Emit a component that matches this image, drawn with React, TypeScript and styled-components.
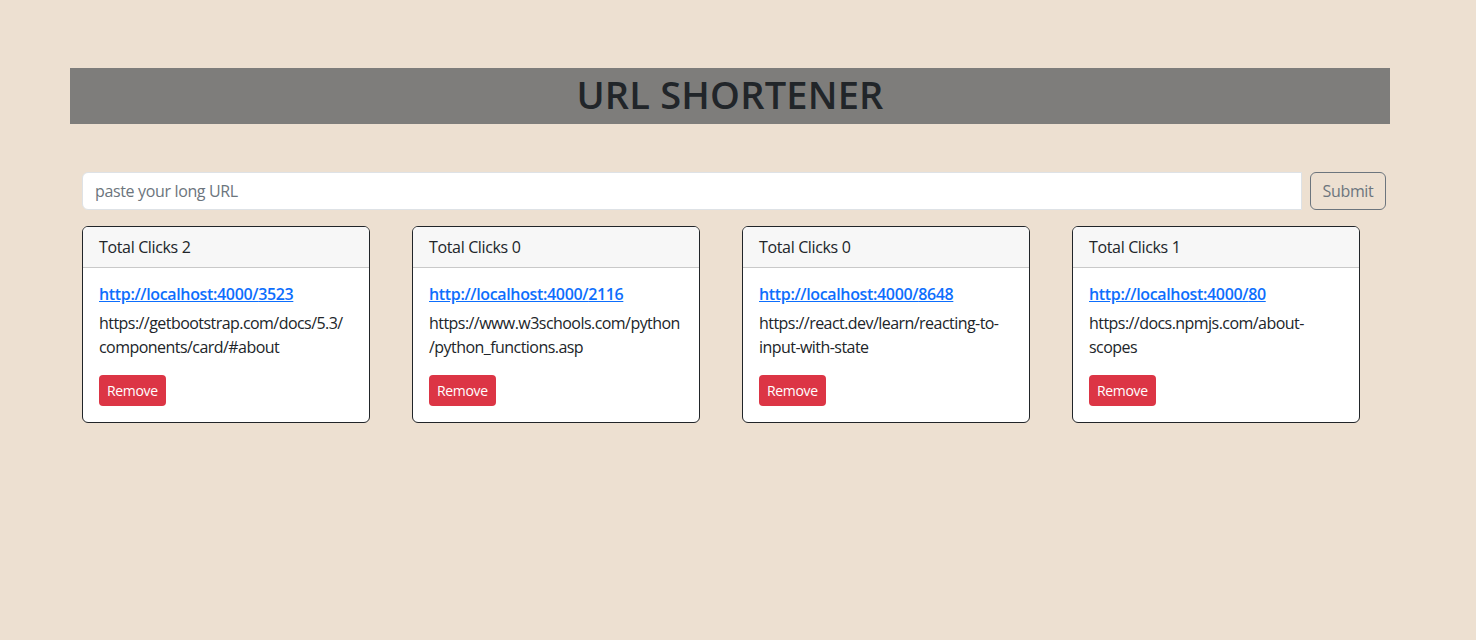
import { Fragment } from "react";
import styled, { createGlobalStyle } from "styled-components";

type Link = {
  id: string;
  clicks: number;
  // parts of the long url, a line may break between them
  longUrl: string[];
};

const links: Link[] = [
  { id: "3523", clicks: 2, longUrl: ["https://getbootstrap.com/docs/5.3/", "components/card/#about"] },
  { id: "2116", clicks: 0, longUrl: ["https://www.w3schools.com/python", "/python_functions.asp"] },
  { id: "8648", clicks: 0, longUrl: ["https://react.dev/learn/reacting-to-input-with-state"] },
  { id: "80", clicks: 1, longUrl: ["https://docs.npmjs.com/about-scopes"] },
];

const App: React.FC = () => {
  return (
    <>
      <GlobalStyle />
      <Page>
        <Header>
          <h1>URL SHORTENER</h1>
        </Header>
        <Form onSubmit={(e) => e.preventDefault()}>
          <UrlInput type="text" placeholder="paste your long URL" />
          <SubmitButton type="submit">Submit</SubmitButton>
        </Form>
        <CardList>
          {links.map((link) => (
            <Card key={link.id}>
              <CardHeader>Total Clicks {link.clicks}</CardHeader>
              <CardBody>
                <ShortLink href="#">http://localhost:4000/{link.id}</ShortLink>
                <LongUrl>
                  {link.longUrl.map((part, i) => (
                    <Fragment key={i}>
                      {i > 0 && <wbr />}
                      {part}
                    </Fragment>
                  ))}
                </LongUrl>
                <RemoveButton>Remove</RemoveButton>
              </CardBody>
            </Card>
          ))}
        </CardList>
      </Page>
    </>
  );
};

export default App;

const GlobalStyle = createGlobalStyle`
  * {
    box-sizing: border-box;
  }
  body {
    margin: 0;
    background-color: #ede0d1;
    color: #212529;
    font-family: "Open Sans", "Noto Sans", sans-serif;
    font-size: 16px;
    line-height: 1.5;
    letter-spacing: -0.35px;
  }
`;

const Page = styled.main`
  width: 1320px;
  margin-left: 70px;
  padding-top: 68px;
  min-height: 640px;
`;

const Header = styled.header`
  background-color: #7e7d7b;
  height: 56px;

  h1 {
    margin: 0;
    text-align: center;
    font-size: 38px;
    font-weight: 600;
    line-height: 48px;
    padding-top: 2px;
    letter-spacing: 0.2px;
  }
`;

const Form = styled.form`
  display: flex;
  gap: 8px;
  margin: 48px 4px 0 12px;
`;

const UrlInput = styled.input`
  flex: 1;
  height: 38px;
  padding: 6px 12px;
  font-family: inherit;
  font-size: 16px;
  letter-spacing: inherit;
  color: #212529;
  background: #fff;
  border: 1px solid #dee2e6;
  border-radius: 6px 0 0 6px;
  outline: none;

  &::placeholder {
    color: #6c757d;
  }
`;

const SubmitButton = styled.button`
  width: 76px;
  height: 38px;
  font-family: inherit;
  font-size: 16px;
  letter-spacing: inherit;
  color: #6c757d;
  background: transparent;
  border: 1px solid #6c757d;
  border-radius: 6px;
  cursor: pointer;
`;

const CardList = styled.section`
  display: flex;
  flex-wrap: wrap;
  gap: 42px;
  margin: 16px 0 0 12px;
`;

const Card = styled.article`
  width: 288px;
  background: #fff;
  border: 1px solid #212529;
  border-radius: 6px;
  overflow: hidden;
  overflow-wrap: break-word;
`;

const CardHeader = styled.div`
  padding: 8px 16px;
  background: #f7f7f7;
  border-bottom: 1px solid #c9c9c9;
`;

const CardBody = styled.div`
  padding: 14px 16px 16px;
`;

const ShortLink = styled.a`
  display: block;
  margin-bottom: 5px;
  color: #0d6efd;
  font-weight: 600;
  text-decoration: underline;
`;

const LongUrl = styled.p`
  margin: 0 0 16px;
  letter-spacing: -0.55px;
`;

const RemoveButton = styled.button`
  height: 31px;
  padding: 4px 8px;
  font-family: inherit;
  font-size: 14px;
  letter-spacing: inherit;
  color: #fff;
  background: #dc3545;
  border: none;
  border-radius: 4px;
  cursor: pointer;
`;
